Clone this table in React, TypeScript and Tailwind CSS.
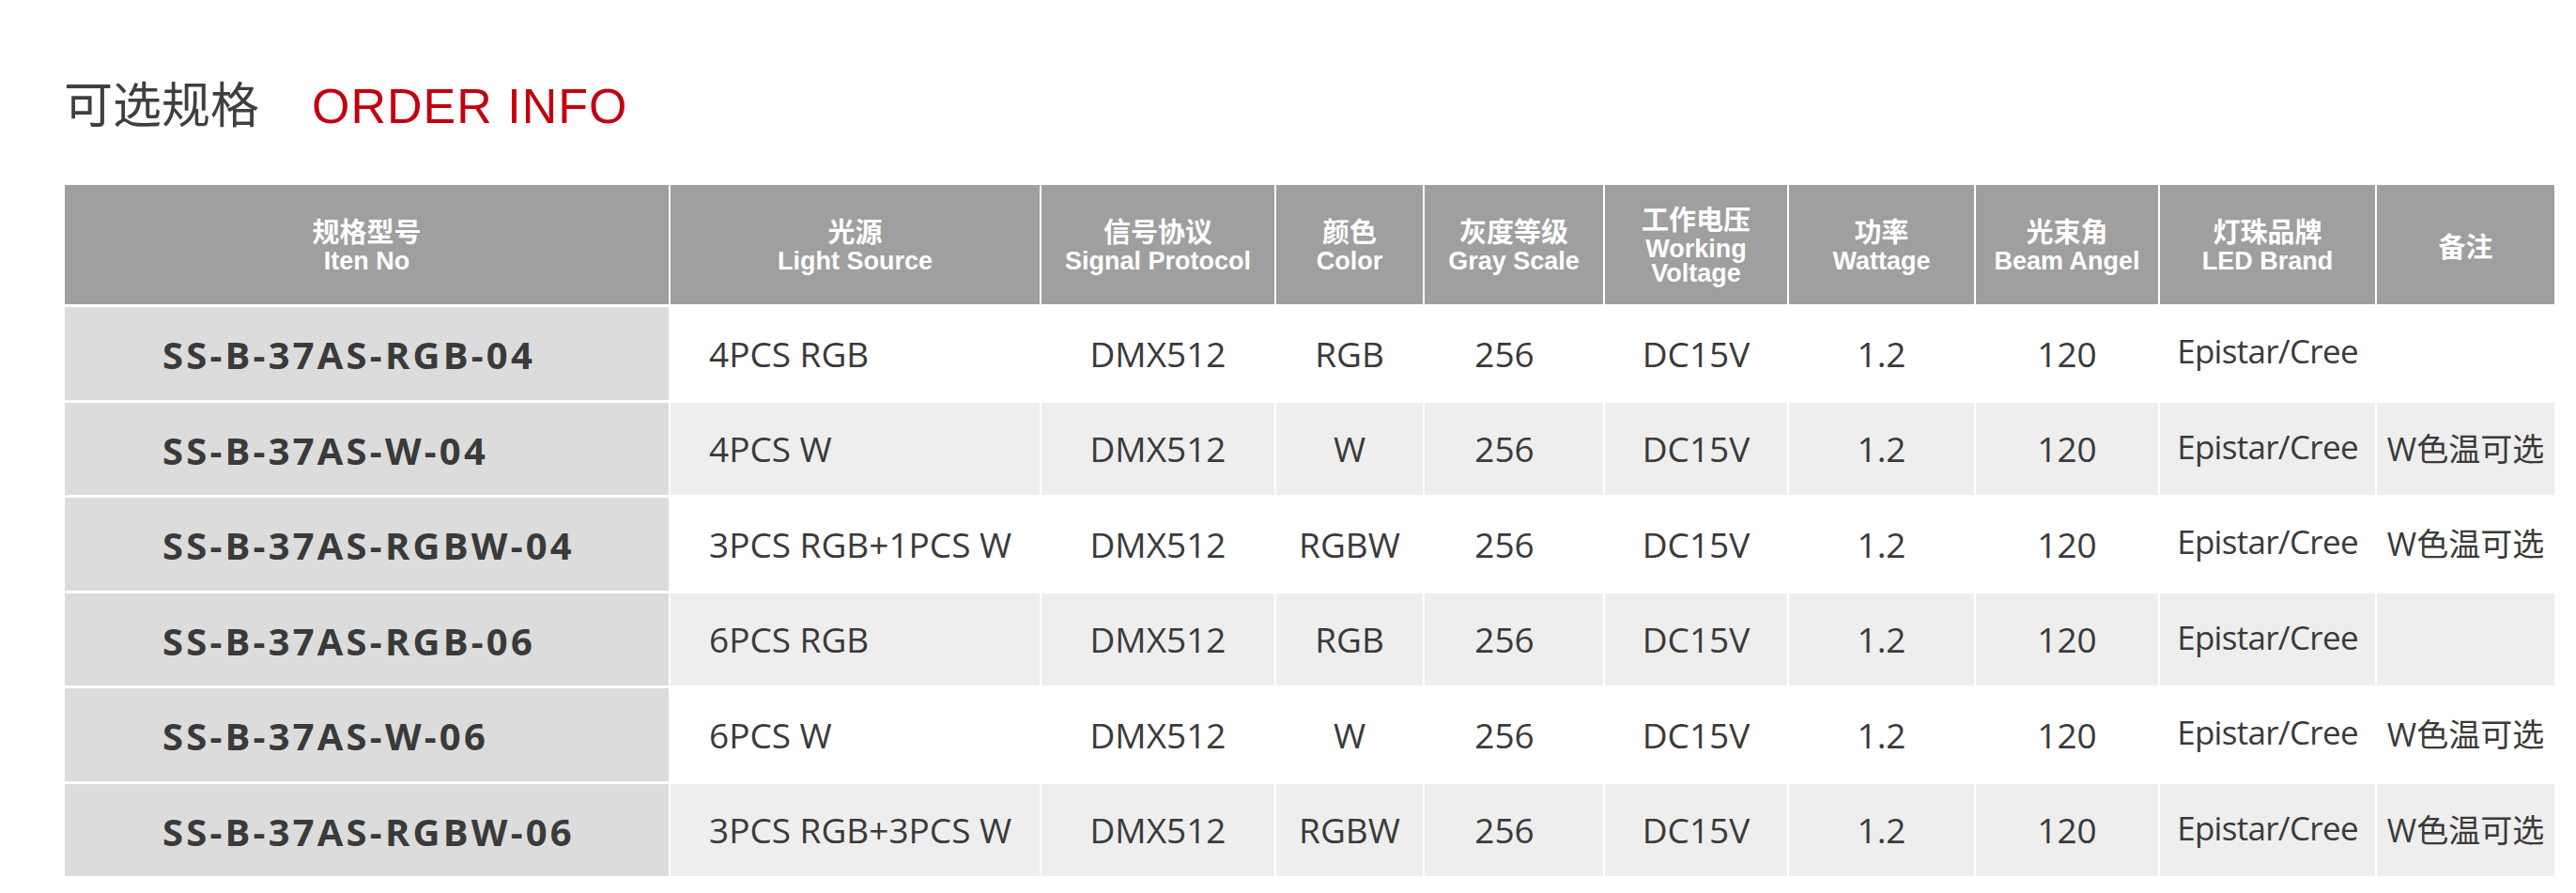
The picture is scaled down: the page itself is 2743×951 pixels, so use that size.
const headers = [
  { zh: "规格型号", en: ["Iten No"] },
  { zh: "光源", en: ["Light Source"] },
  { zh: "信号协议", en: ["Signal Protocol"] },
  { zh: "颜色", en: ["Color"] },
  { zh: "灰度等级", en: ["Gray Scale"] },
  { zh: "工作电压", en: ["Working", "Voltage"] },
  { zh: "功率", en: ["Wattage"] },
  { zh: "光束角", en: ["Beam Angel"] },
  { zh: "灯珠品牌", en: ["LED Brand"] },
  { zh: "备注", en: [] },
];

const rows = [
  ["SS-B-37AS-RGB-04", "4PCS RGB", "RGB", ""],
  ["SS-B-37AS-W-04", "4PCS W", "W", "W色温可选"],
  ["SS-B-37AS-RGBW-04", "3PCS RGB+1PCS W", "RGBW", "W色温可选"],
  ["SS-B-37AS-RGB-06", "6PCS RGB", "RGB", ""],
  ["SS-B-37AS-W-06", "6PCS W", "W", "W色温可选"],
  ["SS-B-37AS-RGBW-06", "3PCS RGB+3PCS W", "RGBW", "W色温可选"],
];

const body = "font-['Open_Sans','Noto_Sans_CJK_SC',sans-serif] leading-none whitespace-nowrap text-[#3a3a3a]";

const Cell = ({ bg, children, className = "" }: { bg: string; children: React.ReactNode; className?: string }) => (
  <div className={`${bg} ${body} flex items-center justify-center text-[37px] ${className}`}>{children}</div>
);

export default function App() {
  return (
    <div className="min-h-screen bg-white pt-[83px]">
      {/* title */}
      <div className="flex h-[52px] items-baseline pl-[68px] leading-none">
        <span className="font-['Noto_Sans_CJK_SC',sans-serif] text-[52px] text-[#3f3f3f]">可选规格</span>
        <span className="ml-[56px] font-['Liberation_Sans',Arial,sans-serif] text-[52px] tracking-[1px] text-[#c4000e]">
          ORDER INFO
        </span>
      </div>

      <div className="mt-[62px] grid w-max grid-cols-[643px_393px_248px_156px_190px_194px_197px_194px_229px_189px] grid-rows-[127px_repeat(6,98.5px)] gap-x-[2px] gap-y-[3px] pl-[69px]">
        {headers.map((h) => (
          <div key={h.zh} className="flex flex-col items-center justify-center bg-[#9f9f9f] text-white">
            <div className="font-['Noto_Sans_CJK_SC',sans-serif] text-[29px] font-bold leading-[30px]">{h.zh}</div>
            {h.en.length > 0 && (
              <div className="mt-[5px] text-center font-['Liberation_Sans',Arial,sans-serif] text-[27px] font-bold leading-[26px]">
                {h.en.map((l) => (
                  <div key={l}>{l}</div>
                ))}
              </div>
            )}
          </div>
        ))}

        {rows.map(([item, src, color, note], i) => {
          const bg = i % 2 === 0 ? "bg-white" : "bg-[#eeeeee]";
          return [
            <div key={item} className="flex items-center bg-[#dcdcdc] pl-[104px] pt-[4px]">
              <span className="font-['Open_Sans',sans-serif] text-[40px] font-bold leading-none tracking-[0.08em] text-[#3a3a3a]">
                {item}
              </span>
            </div>,
            <div key={item + "src"} className={`${bg} ${body} flex items-center pl-[41px] text-[37px]`}>
              {src}
            </div>,
            <Cell key={item + "p"} bg={bg}>DMX512</Cell>,
            <Cell key={item + "c"} bg={bg}>{color}</Cell>,
            <Cell key={item + "g"} bg={bg} className="pr-[20px]">256</Cell>,
            <Cell key={item + "v"} bg={bg}>DC15V</Cell>,
            <Cell key={item + "w"} bg={bg}>1.2</Cell>,
            <Cell key={item + "b"} bg={bg}>120</Cell>,
            <Cell key={item + "l"} bg={bg} className="pb-[5px] !text-[35px] tracking-[-0.02em]">
              Epistar/Cree
            </Cell>,
            <Cell key={item + "n"} bg={bg} className="!text-[34px]">
              {note}
            </Cell>,
          ];
        })}
      </div>
    </div>
  );
}
